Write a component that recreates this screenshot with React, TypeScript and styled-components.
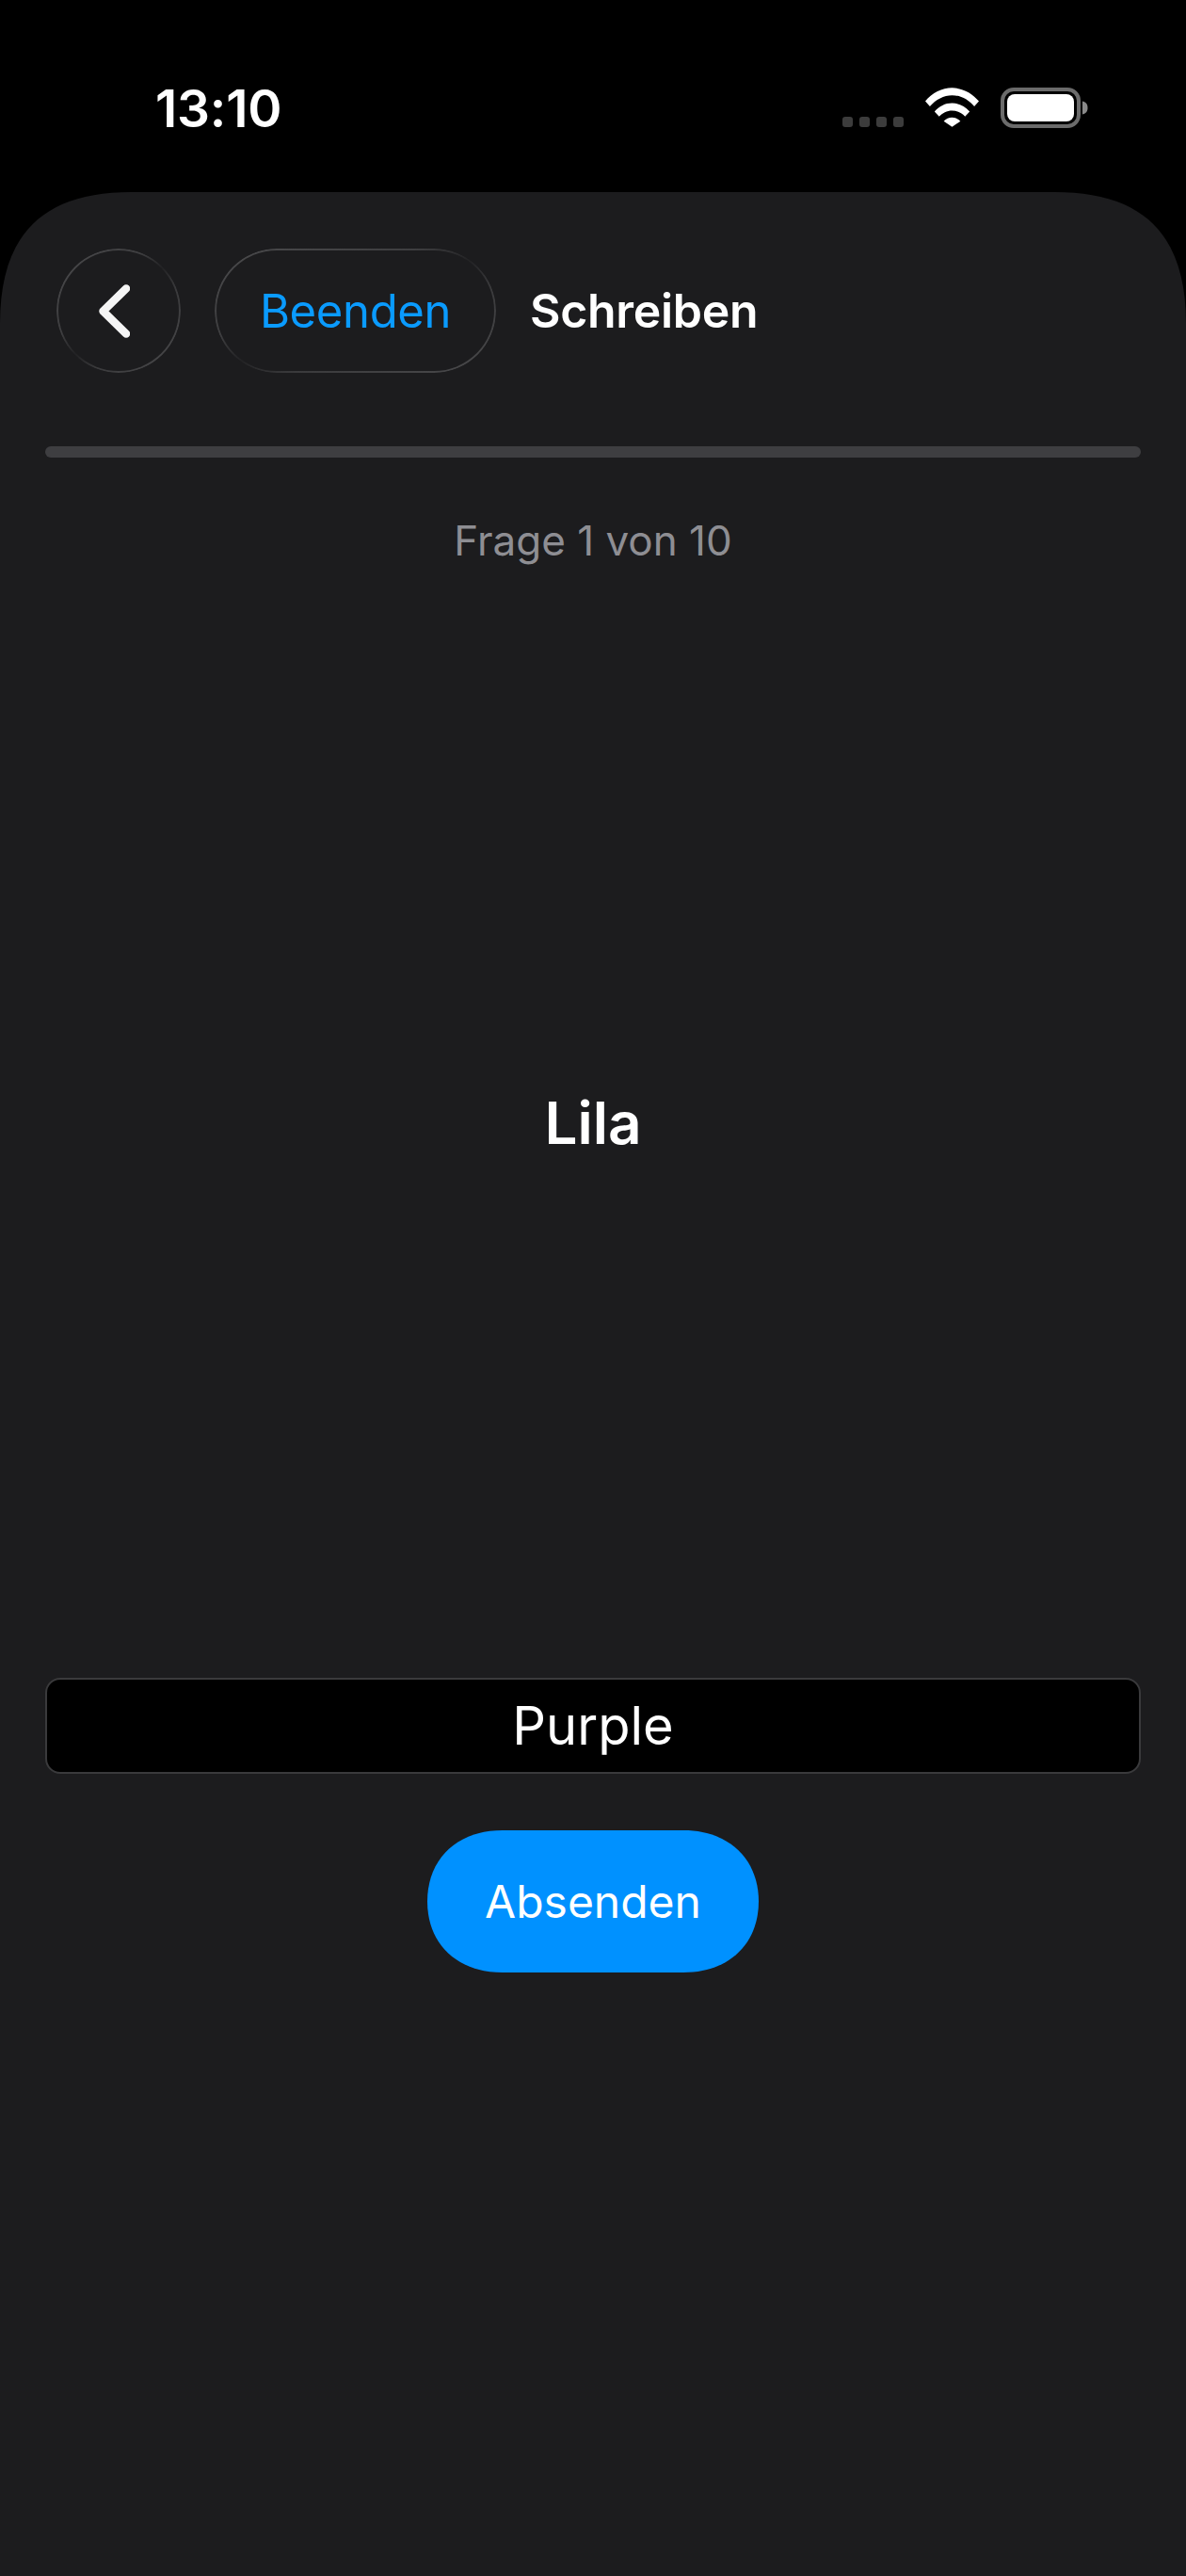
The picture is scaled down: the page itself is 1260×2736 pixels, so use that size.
import React from "react";
import styled, { createGlobalStyle } from "styled-components";

const Global = createGlobalStyle`
  html, body { margin: 0; padding: 0; background: #000; }
  body { font-family: Inter, "Liberation Sans", sans-serif; -webkit-font-smoothing: antialiased; }
  * { box-sizing: border-box; }
`;

const Page = styled.div`
  width: 1260px;
  height: 2736px;
  background: #000;
  display: flex;
  flex-direction: column;
  overflow: hidden;
`;

const StatusBar = styled.div`
  height: 204px;
  flex: none;
  display: flex;
  align-items: flex-start;
  justify-content: space-between;
  padding: 84px 104px 0 165px;
`;

const Time = styled.div`
  font-size: 55px;
  font-weight: 600;
  line-height: 63px;
  color: #fff;
  letter-spacing: -0.2px;
`;

const StatusIcons = styled.div`
  display: flex;
  align-items: flex-start;
  margin-top: 9px;
`;

const Dots = styled.div`
  display: flex;
  gap: 7px;
  margin-top: 31px;
  margin-right: 23px;
`;

const Dot = styled.span`
  width: 11px;
  height: 11px;
  border-radius: 3px;
  background: #3c3c3c;
`;

const Sheet = styled.main`
  flex: 1;
  background: #1c1c1e;
  clip-path: path("M0 140C0 45 45 0 140 0L1120 0C1215 0 1260 45 1260 140L1260 2532L0 2532Z");
  display: flex;
  flex-direction: column;
  padding: 60px 48px 0;
`;

const Header = styled.header`
  display: flex;
  align-items: center;
  height: 132px;
  padding-left: 12px;
`;

const GlassButton = styled.button`
  position: relative;
  height: 132px;
  border: none;
  background: transparent;
  border-radius: 66px;
  padding: 0;
  display: flex;
  align-items: center;
  justify-content: center;
  font-family: inherit;

  &::before {
    content: "";
    position: absolute;
    inset: 0;
    border-radius: inherit;
    padding: 2px;
    background: linear-gradient(to bottom right, #4a4a4c 0%, #3e3e40 36%, #222224 50%, #3a3a3c 64%, #4a4a4c 100%);
    -webkit-mask: linear-gradient(#000 0 0) content-box, linear-gradient(#000 0 0);
    -webkit-mask-composite: xor;
    mask-composite: exclude;
  }
`;

const BackButton = styled(GlassButton)`
  width: 132px;
`;

const BackIcon = styled.svg`
  margin-right: 9px;
`;

const EndButton = styled(GlassButton)`
  width: 299px;
  margin-left: 36px;
  font-size: 49px;
  font-weight: 400;
  letter-spacing: -0.35px;
  color: #0a9bff;
`;

const Title = styled.h1`
  margin: 0 0 0 36px;
  font-size: 50px;
  font-weight: 600;
  letter-spacing: -0.3px;
  color: #fff;
`;

const ProgressTrack = styled.div`
  height: 12px;
  margin-top: 78px;
  border-radius: 6px;
  background: #3e3e41;
`;

const Counter = styled.div`
  margin-top: 64px;
  font-size: 44px;
  line-height: 48px;
  text-align: center;
  color: #8e8e93;
`;

const Prompt = styled.div`
  height: 1184px;
  display: flex;
  align-items: center;
  justify-content: center;
  font-size: 62px;
  font-weight: 600;
  color: #fff;
  padding-top: 4px;
`;

const AnswerField = styled.div`
  height: 102px;
  background: #000;
  border: 2px solid #3a3a3c;
  border-radius: 16px;
  display: flex;
  align-items: center;
  justify-content: center;
  font-size: 56px;
  color: #fff;
`;

const SubmitRow = styled.div`
  display: flex;
  justify-content: center;
  margin-top: 60px;
`;

const SubmitButton = styled.button`
  width: 352px;
  height: 151px;
  border: none;
  background: #0091ff;
  clip-path: path("M0 75.5C0 31 31 0 80 0L272 0C321 0 352 31 352 75.5C352 120 321 151 272 151L80 151C31 151 0 120 0 75.5Z");
  color: #fff;
  font-family: inherit;
  font-size: 48px;
  font-weight: 400;
`;

const BatteryIcon = styled.svg`
  margin-left: 23px;
`;

export default function App() {
  return (
    <Page>
      <Global />
      <StatusBar>
        <Time>13:10</Time>
        <StatusIcons>
          <Dots>
            <Dot /><Dot /><Dot /><Dot />
          </Dots>
          <svg width="57" height="42" viewBox="0 0 58 42" fill="#fff">
            <path d="M0 14.500C7.500 5.500 18 0 29 0s21.500 5.500 29 14.500l-5 5.500C46.500 12.500 38 8 29 8S11.500 12.500 5 20z" />
            <path d="M10 25.500C15 20 21.500 16.500 29 16.500s14 3.500 19 9l-5 5.500C39.500 27 34.500 24.500 29 24.500S18.500 27 15 31z" />
            <path d="M20 36c2.400-2.500 5.500-4 9-4s6.600 1.500 9 4l-9 6z" />
          </svg>
          <BatteryIcon width="93" height="43" viewBox="0 0 93 43">
            <rect x="2" y="2" width="81" height="39" rx="12" fill="none" stroke="#6b6b6b" strokeWidth="4" />
            <rect x="7" y="7" width="71" height="29" rx="8" fill="#fff" />
            <path d="M87 14.500c4 .8 5.500 3.500 5.500 7s-1.500 6.200-5.500 7z" fill="#8a8a8a" />
          </BatteryIcon>
        </StatusIcons>
      </StatusBar>
      <Sheet>
        <Header>
          <BackButton aria-label="Zurück">
            <BackIcon width="33" height="57" viewBox="0 0 33 57" fill="none" stroke="#f5f5f5" strokeWidth="8.5" strokeLinecap="round" strokeLinejoin="round">
              <path d="M29 4.500 4.500 28.500 29 52.500" />
            </BackIcon>
          </BackButton>
          <EndButton>Beenden</EndButton>
          <Title>Schreiben</Title>
        </Header>
        <ProgressTrack />
        <Counter>Frage 1 von 10</Counter>
        <Prompt>Lila</Prompt>
        <AnswerField>Purple</AnswerField>
        <SubmitRow>
          <SubmitButton>Absenden</SubmitButton>
        </SubmitRow>
      </Sheet>
    </Page>
  );
}
